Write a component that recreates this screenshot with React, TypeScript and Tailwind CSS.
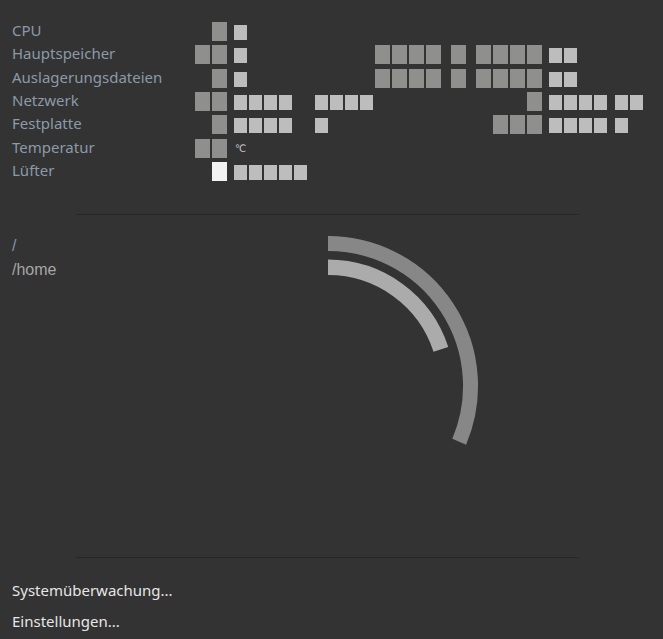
import React from 'react';

// Zeilen der Systemübersicht; Kästchen stehen für nicht darstellbare Glyphen
// L = großes Kästchen, W = weißes Kästchen, s = kleines Kästchen, c = ℃
// ' ' = schmale Lücke, '_' = breite Lücke
type Row = { label: string; left: string; s1: string; right: string; s2: string };

const rows: Row[] = [
    { label: 'CPU', left: 'L', s1: 's', right: '', s2: '' },
    { label: 'Hauptspeicher', left: 'LL', s1: 's', right: 'LLLL L LLLL', s2: 'ss' },
    { label: 'Auslagerungsdateien', left: 'L', s1: 's', right: 'LLLL L LLLL', s2: 'ss' },
    { label: 'Netzwerk', left: 'LL', s1: 'ssss_ssss', right: 'L', s2: 'ssss ss' },
    { label: 'Festplatte', left: 'L', s1: 'ssss_s', right: 'LLL', s2: 'ssss s' },
    { label: 'Temperatur', left: 'LL', s1: 'c', right: '', s2: '' },
    { label: 'Lüfter', left: 'W', s1: 'sssss', right: '', s2: '' },
];

const Blocks = ({ spec }: { spec: string }) => (
    <div className="flex items-start gap-[2px]">
        {spec.split('').map((ch, i) => {
            if (ch === 'L') return <div key={i} className="w-[15px] h-[19px] bg-[#8f8f8d]" />;
            if (ch === 'W') return <div key={i} className="w-[15px] h-[19px] bg-[#f3f3f3]" />;
            if (ch === 's') return <div key={i} className="w-[13px] h-[15px] mt-[3px] bg-[#bdbdbd]" />;
            if (ch === 'c')
                return (
                    <span key={i} className="ml-[1px] mt-[3px] text-[10px] leading-[14px] text-[#c8c8c8] font-['DejaVu_Sans',sans-serif]">
                        ℃
                    </span>
                );
            if (ch === '_') return <div key={i} className="w-[19px]" />;
            return <div key={i} className={spec.includes('L') ? 'w-[6px]' : 'w-[4px]'} />;
        })}
    </div>
);

export default function App() {
    return (
        <div className="w-[663px] h-[639px] bg-[#333333] flex flex-col font-['Noto_Sans',sans-serif] overflow-hidden">
            <div className="h-[214px] pt-[22px] flex flex-col">
                {rows.map((r) => (
                    <div key={r.label} className="h-[23.33px] flex items-start pl-[12px]">
                        <div className="w-[215px] flex items-start justify-between">
                            <span className="text-[15px] leading-[16px] text-[#8b9aa9]">{r.label}</span>
                            <Blocks spec={r.left} />
                        </div>
                        <div className="w-[315px] pl-[7px] flex items-start">
                            <Blocks spec={r.s1} />
                            <div className="ml-auto">
                                <Blocks spec={r.right} />
                            </div>
                        </div>
                        <div className="pl-[7px]">
                            <Blocks spec={r.s2} />
                        </div>
                    </div>
                ))}
            </div>

            <div className="ml-[76px] w-[503px] h-px bg-[#272727]" />

            <div className="h-[342px] flex items-start pl-[12px]">
                <div className="w-[308px] pt-[19px] flex flex-col font-['Liberation_Sans',Arial,sans-serif] text-[16px] leading-[23.5px]">
                    <span className="text-[#8094ab]">/</span>
                    <span className="text-[#a6a6a6]">/home</span>
                </div>
                <svg width="170" height="230" viewBox="0 0 170 230" className="mt-[13px]">
                    <path d="M 8 15.5 A 142.5 142.5 0 0 1 139.2 213.7" fill="none" stroke="#878787" strokeWidth="15" />
                    <path d="M 8 39.3 A 118.7 118.7 0 0 1 120.9 121.3" fill="none" stroke="#ababab" strokeWidth="15.5" />
                </svg>
            </div>

            <div className="ml-[76px] w-[503px] h-px bg-[#272727]" />

            <div className="pt-[17px] pl-[12px] flex flex-col text-[15px] leading-[31px] text-[#e6e6e6]">
                <span>Systemüberwachung...</span>
                <span>Einstellungen...</span>
            </div>
        </div>
    );
}
